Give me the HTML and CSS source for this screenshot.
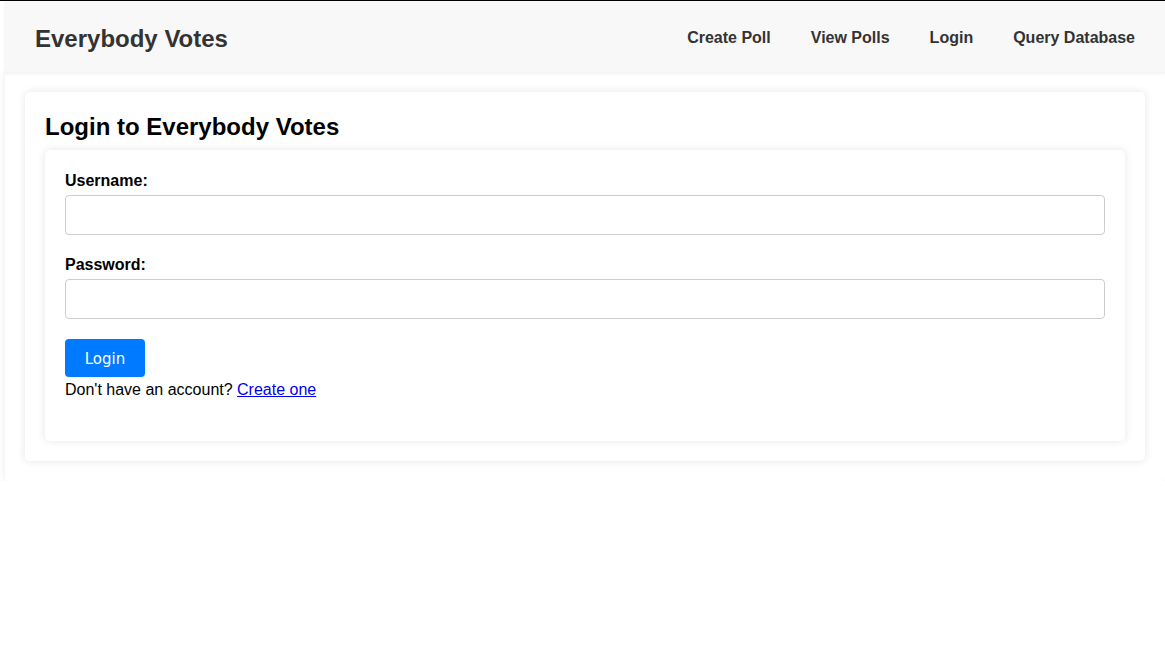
FILE: index.html
```html
<!DOCTYPE html>
<html lang="en">
<head>
<meta charset="utf-8">
<title>Everybody Votes - Login</title>
<link rel="stylesheet" href="styles.css">
</head>
<body>
<header class="site-header">
  <div class="brand">Everybody Votes</div>
  <nav class="nav">
    <a href="#" class="nav-link">Create Poll</a>
    <a href="#" class="nav-link">View Polls</a>
    <a href="#" class="nav-link">Login</a>
    <a href="#" class="nav-link">Query Database</a>
  </nav>
</header>
<main class="page">
  <section class="card">
    <h2 class="card-title">Login to Everybody Votes</h2>
    <form class="form-card">
      <label class="field-label" for="username">Username:</label>
      <input class="field-input" id="username" type="text">
      <label class="field-label" for="password">Password:</label>
      <input class="field-input" id="password" type="password">
      <button class="btn" type="button">Login</button>
      <p class="signup">Don't have an account? <a href="#" class="signup-link">Create one</a></p>
    </form>
  </section>
</main>
</body>
</html>
```

FILE: styles.css
```css
html {
  border-top: 1px solid #000;
}
body {
  margin: 0;
  font-family: "Liberation Sans", Arial, sans-serif;
  font-size: 16px;
  color: #000;
  background: #fff;
}
.site-header {
  margin-left: 5px;
  height: 71px;
  background: #f8f8f8;
  box-shadow: 0 2px 4px rgba(0, 0, 0, 0.06);
  display: flex;
  align-items: center;
  justify-content: space-between;
  padding: 0 30px;
  box-sizing: border-box;
  position: relative;
  z-index: 1;
}
.brand {
  font-size: 24px;
  font-weight: bold;
  color: #333;
  margin-top: 4px;
}
.nav {
  display: flex;
  gap: 40px;
  margin-top: 3px;
}
.nav-link {
  font-weight: bold;
  color: #333;
  text-decoration: none;
}
.page {
  margin: 0 0 0 5px;
  padding: 20px;
  background: #fff;
  box-shadow: 0 0 8px rgba(0, 0, 0, 0.08);
  border-radius: 4px;
}
.card {
  background: #fff;
  padding: 20px;
  border-radius: 5px;
  box-shadow: 0 0 8px rgba(0, 0, 0, 0.1);
}
.card-title {
  margin: 1px 0 9px;
  font-size: 24px;
  line-height: 28px;
  font-weight: bold;
}
.form-card {
  padding: 20px;
  border-radius: 5px;
  box-shadow: 0 0 8px rgba(0, 0, 0, 0.1);
  display: flex;
  flex-direction: column;
  align-items: flex-start;
}
.field-label {
  font-weight: bold;
  line-height: 18px;
  margin-top: 2px;
  margin-bottom: 5px;
}
.field-input {
  align-self: stretch;
  height: 40px;
  box-sizing: border-box;
  border: 1px solid #ccc;
  border-radius: 4px;
  padding: 8px 10px;
  font-size: 16px;
  margin: 0 0 19px;
}
.btn {
  margin-top: 1px;
  width: 80px;
  height: 38px;
  border: none;
  border-radius: 4px;
  background: #007bff;
  color: #fff;
  font-family: "DejaVu Sans", sans-serif;
  font-size: 15px;
  padding: 1px 0 0;
  cursor: pointer;
}
.signup {
  margin: 0 0 22px;
  line-height: 19px;
  padding-top: 3px;
}
.signup-link {
  color: #0000ee;
}
```
